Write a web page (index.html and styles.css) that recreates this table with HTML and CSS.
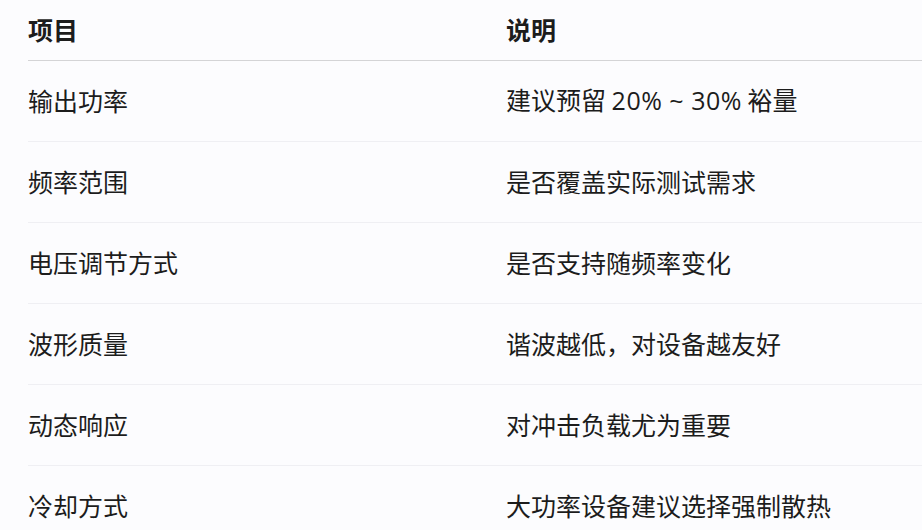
FILE: index.html
```html
<!DOCTYPE html>
<html lang="zh-CN">
<head>
<meta charset="utf-8">
<link rel="stylesheet" href="styles.css">
</head>
<body>
<table class="spec">
  <thead>
    <tr><th class="col-a">项目</th><th>说明</th></tr>
  </thead>
  <tbody>
    <tr><td>输出功率</td><td>建议预留 <span class="num">20% ~ 30%</span> 裕量</td></tr>
    <tr><td>频率范围</td><td>是否覆盖实际测试需求</td></tr>
    <tr><td>电压调节方式</td><td>是否支持随频率变化</td></tr>
    <tr><td>波形质量</td><td>谐波越低，对设备越友好</td></tr>
    <tr><td>动态响应</td><td>对冲击负载尤为重要</td></tr>
    <tr><td>冷却方式</td><td>大功率设备建议选择强制散热</td></tr>
  </tbody>
</table>
</body>
</html>
```
FILE: styles.css
```css
html, body {
  margin: 0;
  padding: 0;
  background: #fcfcfe;
}
body {
  padding-left: 28px;
  overflow: hidden;
  font-family: "Noto Sans CJK SC", "Noto Sans", sans-serif;
  color: #1c1c1c;
}
.spec {
  width: 894px;
  border-collapse: collapse;
  table-layout: fixed;
}
.spec th, .spec td {
  padding: 0;
  text-align: left;
  font-size: 25px;
  line-height: 30px;
  vertical-align: middle;
  white-space: nowrap;
}
.spec th {
  font-weight: 700;
  height: 58px;
  padding-bottom: 2px;
  border-bottom: 1px solid #d4d4d6;
}
.spec .col-a {
  width: 478px;
}
.spec td {
  height: 77px;
  padding-bottom: 3px;
  border-bottom: 1px solid #efeff3;
}
.num {
  font-family: "Open Sans", "Noto Sans CJK SC", sans-serif;
  letter-spacing: 0.5px;
}
```
